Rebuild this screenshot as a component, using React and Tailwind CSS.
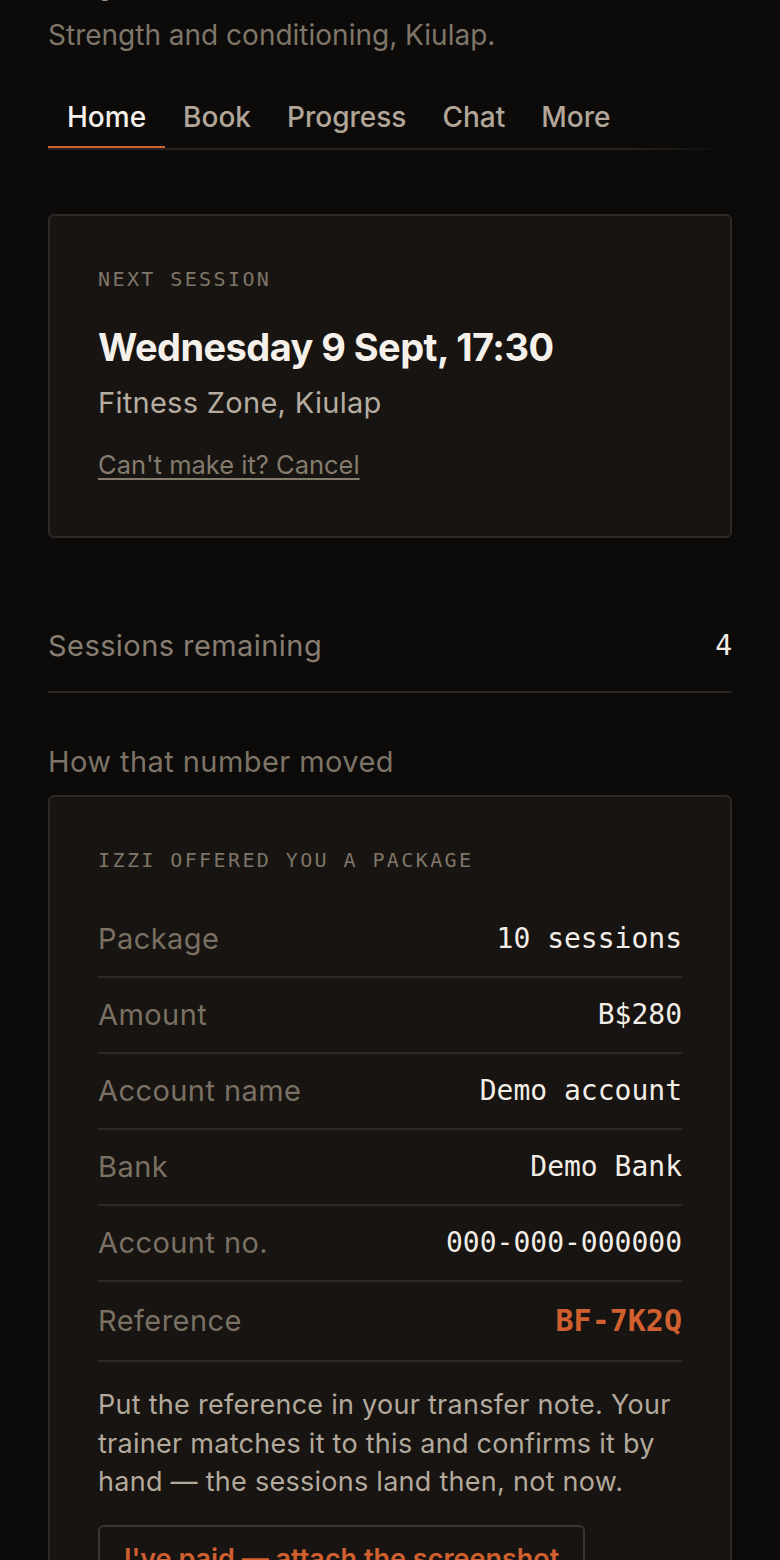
import React, { useState } from 'react';

const mono = "font-['DejaVu_Sans_Mono',monospace]";

const tabs = ['Home', 'Book', 'Progress', 'Chat', 'More'];

const rows = [
  { label: 'Package', value: '10 sessions' },
  { label: 'Amount', value: 'B$280' },
  { label: 'Account name', value: 'Demo account' },
  { label: 'Bank', value: 'Demo Bank' },
  { label: 'Account no.', value: '000-000-000000' },
];

const App = () => {
  const [tab, setTab] = useState('Home');

  return (
    <div className="min-h-screen bg-[#0c0b0a] px-12 pb-10 font-['Inter',sans-serif] text-[#f2ede6] overflow-hidden">
      <h1 className="-mt-[46px] mb-[14px] text-[40px] leading-[48px] font-bold tracking-tight">Hey Haziqah</h1>
      <p className="text-[28px] leading-[38px] text-[#7f7669]">Strength and conditioning, Kiulap.</p>

      <nav className="mt-[30px]">
        <div className="flex">
          {tabs.map((t) => (
            <button
              key={t}
              onClick={() => setTab(t)}
              className={
                tab === t
                  ? 'px-[19px] pt-[15px] pb-[11px] text-[28px] leading-[36px] font-medium text-[#f5f1ea] border-b-2 border-[#d0622f]'
                  : 'px-[18px] pt-[15px] pb-[11px] text-[28px] leading-[36px] font-medium text-[#b1a698] border-b-2 border-transparent'
              }
            >
              {t}
            </button>
          ))}
        </div>
        <div className="h-[2px] bg-linear-to-r from-[#26221f] from-85% to-transparent" />
      </nav>

      <section className="mt-16 rounded-md border-2 border-[#2e2926] bg-[#171411] px-12 pt-12 pb-[52px]">
        <div className={`${mono} text-[20px] leading-[30px] tracking-[0.12em] text-[#7f7568]`}>NEXT SESSION</div>
        <div className="mt-[30px] text-[38px] leading-[46px] font-bold tracking-[-0.015em] text-[#f5f1ea]">Wednesday 9 Sept, 17:30</div>
        <div className="mt-[13px] text-[29px] leading-[40px] tracking-[0.01em] text-[#b6ada1]">Fitness Zone, Kiulap</div>
        <a href="#" className="mt-[23px] block text-[25.5px] leading-[38px] text-[#857b6e] underline underline-offset-4">Can't make it? Cancel</a>
      </section>

      <div className="mt-[63px] flex items-center justify-between border-b-2 border-[#2a2623] py-[25px]">
        <span className="text-[29px] leading-[40px] tracking-[0.015em] text-[#877d70]">Sessions remaining</span>
        <span className={`${mono} text-[28px] leading-[40px] text-[#f2ede6]`}>4</span>
      </div>

      <h2 className="mt-[49px] text-[29px] leading-[40px] tracking-[0.015em] text-[#7d7366]">How that number moved</h2>

      <section className="mt-[13px] rounded-md border-2 border-[#2e2926] bg-[#171411] px-12 pt-12 pb-12">
        <div className={`${mono} text-[20px] leading-[30px] tracking-[0.12em] text-[#7f7568]`}>IZZI OFFERED YOU A PACKAGE</div>

        <div className="mt-[27px]">
          {rows.map((r) => (
            <div key={r.label} className="flex items-center justify-between border-b-2 border-[#2c2825] py-4">
              <span className="text-[29px] leading-[42px] tracking-[0.015em] text-[#7a7063]">{r.label}</span>
              <span className={`${mono} text-[28px] leading-[42px] text-[#f2ede6]`}>{r.value}</span>
            </div>
          ))}
          <div className="flex items-center justify-between border-b-2 border-[#2c2825] py-4">
            <span className="text-[29px] leading-[46px] tracking-[0.015em] text-[#7a7063]">Reference</span>
            <span className={`${mono} text-[30px] leading-[46px] font-bold text-[#d0602f]`}>BF-7K2Q</span>
          </div>
        </div>

        <p className="mt-6 text-[27px] leading-[38.5px] tracking-[0.01em] text-[#b3a99c]">
          Put the reference in your transfer note. Your trainer matches it to this and confirms it by hand — the sessions land then, not now.
        </p>

        <button className="mt-[23px] rounded-md border-2 border-[#3b3632] px-6 py-[14px] text-[27px] leading-[36px] font-semibold text-[#d0602f]">
          I've paid — attach the screenshot
        </button>
      </section>
    </div>
  );
};

export default App;
